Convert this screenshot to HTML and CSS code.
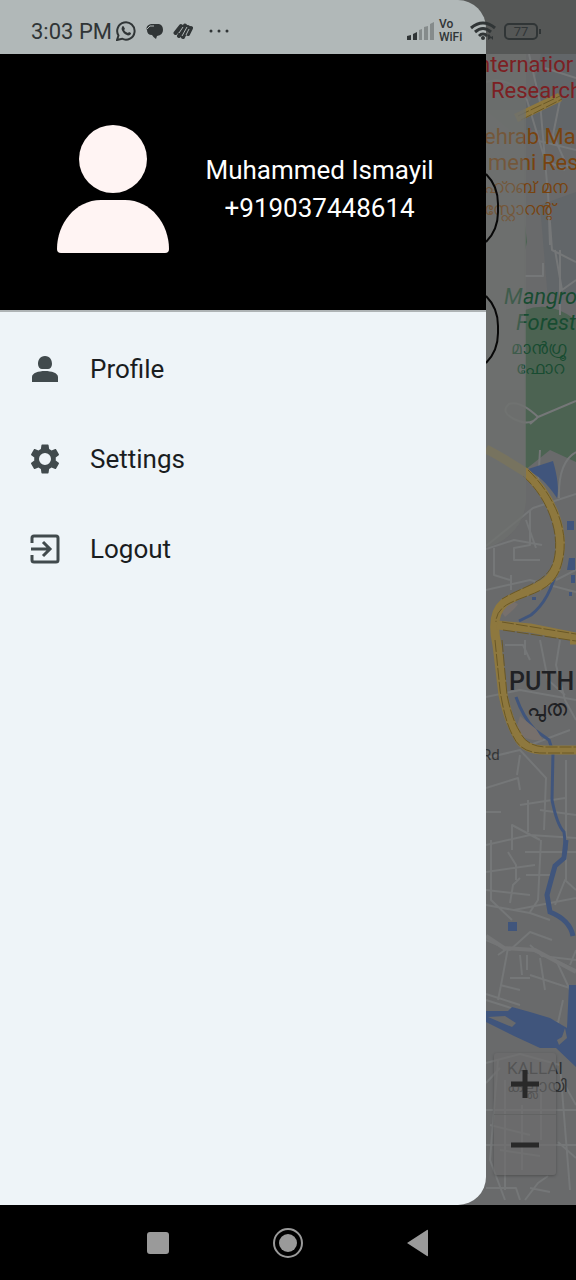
FILE: index.html
```html
<!DOCTYPE html>
<html lang="en">
<head>
<meta charset="utf-8">
<meta name="viewport" content="width=device-width, initial-scale=1">
<title>Map menu</title>
<link rel="stylesheet" href="styles.css">
</head>
<body>
<div class="screen">
  <main class="stage">
    <svg class="map" viewBox="0 0 576 1205" preserveAspectRatio="xMaxYMin slice" role="img" aria-label="Map">
      <rect class="land" width="576" height="1205"/>
      <path class="block" d="M486 92Q505 82 530 102L541 54H576V130L510 130L486 110ZM540 205L576 192V300H548Z"/>
      <path class="park" d="M525 225L527 242L525 250ZM525 310Q550 300 576 320V462L550 450L525 470Z"/>
      <g class="minor">
        <path d="M486 82Q510 75 527 100L545 160 565 170M529 54L540 102 548 195 552 250 576 262M576 78L545 68M535 140L576 150M560 100L553 135 568 168M525 276H543V263M555 250L562 290 576 280M548 190L550 245M560 250V315"/>
        <path d="M538 417Q520 400 509 404Q500 412 514 419Q530 427 538 417L576 401M538 417L530 424M538 486L540 450 M576 452Q558 462 559 498M576 494L533 508 486 546M530 510V545L514 548V560H540M486 549L514 540 542 545M494 548V575L510 580M511 575V590M486 590L530 580 576 592M556 580L576 570M526 520L536 548"/>
        <path d="M525 640V655M540 640L548 680 565 695M560 640L556 665 565 700 576 720M505 645H523L530 660M486 697L520 690 576 700M486 758L520 750 546 778 544 830M520 755L517 775M530 745L570 730M486 788L518 778 520 790M486 812H501M520 805L565 798M528 800V832M512 850V825L540 840M486 845L530 835 576 838M566 760V880M576 815L540 810"/>
        <path d="M491 840V900L512 920M508 852L516 865V880M541 840L538 900 530 912M486 872L535 865M525 852H576M526 875H550M486 890L530 895M510 903L513 885 520 878M486 905L530 913 550 920M514 910L576 898M555 905L565 880 576 890M486 940L510 950 530 932 552 940M498 955L508 948 502 980 498 1000M530 945L542 956 576 960M532 950L576 970M520 955L522 975M527 955V970M510 978H530M500 985L520 990M530 975L576 990M556 960L570 990 572 1010M486 1000L558 1023 563 1000M486 994L520 1005M540 958L545 990M576 950L570 965"/>
        <path d="M486 1063L520 1054 560 1065 570 1190M486 1110H576M486 1145H576M505 1080V1190M522 1105V1170M490 1125L530 1135M498 1060L490 1160 505 1200M541 1090V1140M486 1188H516L520 1200M525 1200L538 1183 548 1176M530 1188L550 1192M562 1080L576 1105M558 1142L576 1158M500 1150L540 1156M486 1083L500 1068"/>
      </g>
      <path class="minor wide" d="M486 936L504 948 535 950 576 972"/>
      <g class="river">
        <path d="M553 461Q560 485 557 498Q541 474 525 470Z"/>
        <path d="M567 521H574V530H567ZM569 558H575V570H567ZM571 575H575V583H571ZM569 592H572V596H569ZM532 597H536V600H532ZM508 922H517V931H508Z"/>
        <path class="stream" d="M557 568Q550 600 531 615L519 621M516 697Q523 717 535 730L549 740 553 752 552 800Q557 825 564 832L566 850"/>
        <path class="stream thick" d="M566 840L564 858 555 866Q551 880 547 895L550 912 Q570 920 573 936"/>
        <path d="M486 1011L508 1011 512 1007 530 1012 550 1018 567 1028 569 985H576V1067L556 1048 540 1048 514 1036 486 1022Z"/>
        <path class="island" d="M488 1017L505 1016 516 1023 512 1027Z"/>
        <path class="island" d="M565 1028L567 1038 559 1045 557 1040 562 1037Z"/>
      </g>
      <path class="blush" d="M505 617Q516 608 518 604L512 601 501 611ZM515 732L520 716 536 729 543 740Q527 742 515 732Z"/>
      <g class="roads">
        <path d="M486 449Q500 456 525 472C548 492 567 528 558 562C552 590 525 588 504 603Q490 615 497 645L503 695Q509 722 517 735Q523 750 545 750H576"/>
        <path d="M497 625L530 628 576 637M516 118L560 97M570 640H576"/>
      </g>
      <g class="lanes">
        <path d="M528 470C551 492 571 528 562 562C555 592 530 593 510 603Q496 610 496 622M523 476C545 495 561 530 554 560C548 583 525 585 502 599"/>
        <path d="M502 622L576 634M503 630L576 641M495 640L500 690Q505 722 513 736Q521 754 545 753H576M502 640L507 695Q512 720 520 732Q526 746 545 747H576M518 116L560 96M521 120L562 99"/>
      </g>
      <path class="fog" d="M486 54H526V500Q524 535 486 548Z"/>
      <g class="place hospital"><text x="478" y="72">nternatior</text><text x="491" y="98">Research</text></g>
      <g class="place food"><text x="484" y="144">ehrab Ma</text><text x="488" y="170">meni Res</text><text class="small" x="484" y="193">ഹ്റബ് മന</text><text class="small" x="484" y="215">സ്റ്റോറന്റ്</text></g>
      <g class="place nature"><text x="504" y="304">Mangro</text><text x="516" y="330">Forest</text><text class="small" x="511" y="354">മാൻഗ്രൂ</text><text class="small" x="516" y="374">ഫോറ</text></g>
      <path class="fog light" d="M486 110H524V390H486Z"/>
      <g class="place town"><text x="509" y="690">PUTH</text><text class="local" x="527" y="716">പുത</text></g>
      <text class="place street" x="482" y="760">Rd</text>
      <g class="place district"><text x="507" y="1074">KALLAI</text><text x="507" y="1092">കല്ലായി</text></g>
      <path class="outline" d="M486 174Q498 186 498 204V212Q498 230 486 242M486 296Q498 308 498 326V333Q498 351 486 363"/>
      <rect class="shade" width="576" height="54"/>
    </svg>
    <div class="zoom">
      <button class="zoom-button" aria-label="Zoom in"><svg width="28" height="28"><path d="M14 0V28M0 14H28"/></svg></button>
      <button class="zoom-button" aria-label="Zoom out"><svg width="28" height="28"><path d="M0 14H28"/></svg></button>
    </div>
    <aside class="drawer">
      <header class="account">
        <svg class="avatar" viewBox="0 0 112 128" aria-hidden="true"><circle cx="56" cy="34" r="34"/><path d="M44 75H68C94 75 112 99 112 124Q112 128 108 128H4Q0 128 0 124C0 99 18 75 44 75Z"/></svg>
        <div class="identity"><span>Muhammed Ismayil</span><span>+919037448614</span></div>
      </header>
      <nav class="menu">
        <a class="item" href="#profile"><svg class="icon" viewBox="0 0 30 30"><path d="M15 2C20 2 22 6 22 10C22 13 20 15 18 15H12C10 15 8 13 8 10C8 6 10 2 15 2ZM2 28V23C2 15 28 15 28 23V28Z"/></svg>Profile</a>
        <a class="item" href="#settings"><svg class="icon" viewBox="2 2 20 20"><path d="M19.14 12.94c.04-.3.06-.61.06-.94s-.02-.64-.07-.94l2.03-1.58c.18-.14.23-.41.12-.61l-1.92-3.32c-.12-.22-.37-.29-.59-.22l-2.39.96c-.5-.38-1.03-.7-1.62-.94L14.4 2.81c-.04-.24-.24-.41-.48-.41h-3.84c-.24 0-.43.17-.47.41L9.25 5.35c-.59.24-1.13.57-1.62.94l-2.39-.96c-.22-.08-.47 0-.59.22L2.74 8.87c-.12.21-.08.47.12.61l2.03 1.58c-.05.3-.09.63-.09.94s.02.64.07.94l-2.03 1.58c-.18.14-.23.41-.12.61l1.92 3.32c.12.22.37.29.59.22l2.39-.96c.5.38 1.03.7 1.62.94l.36 2.54c.05.24.24.41.48.41h3.84c.24 0 .44-.17.47-.41l.36-2.54c.59-.24 1.13-.56 1.62-.94l2.39.96c.22.08.47 0 .59-.22l1.92-3.32c.12-.22.07-.47-.12-.61ZM12 16a4 4 0 1 1 0-8 4 4 0 0 1 0 8Z"/></svg>Settings</a>
        <a class="item" href="#logout"><svg class="icon line" viewBox="0 0 30 30"><path d="M2 9V4Q2 2 4 2H26Q28 2 28 4V26Q28 28 26 28H4Q2 28 2 26V21M1 15H20M13 8L20 15 13 22"/></svg>Logout</a>
      </nav>
    </aside>
    <div class="status">
      <time>3:03 PM</time>
      <svg class="chat" width="20" height="20" viewBox="0 0 20 20"><path class="stroke" d="M1 19L2.5 14.5A8.7 8.7 0 1 1 6 17.7Z"/><path d="M6 6Q7 4 8 6L9 8 8 9Q9 11 12 12L13 11 15 12Q15 14 12 14.5Q7 13 5.500 8Z"/></svg>
      <svg class="bubble" width="18" height="18" viewBox="0 0 18 18"><path d="M5 2H13Q17 3 17 8Q17 13 11 14L10 17Q7 15 6 13Q1 13 1 8Q-1 4 5 2Z"/><path class="gap" d="M1 7L4 4H8"/></svg>
      <svg class="badge" width="20" height="18" viewBox="0 0 20 18"><path class="bars" d="M2.500 11L8 4M6 14L12 3.500M10 15L15 5M15 12L18 6"/><path class="gap" d="M6 11L10 5M9 14L14 5M13 13L16 7"/></svg>
      <svg width="20" height="6"><circle cx="2" cy="3" r="1.500"/><circle cx="10" cy="3" r="1.500"/><circle cx="18" cy="3" r="1.500"/></svg>
      <span class="spacer"></span>
      <svg class="signal" width="27" height="18" viewBox="0 0 27 18"><path d="M0 14L4 13V18H0ZM6 12L10 10V18H6Z"/><path class="faint" d="M12 8L15 7V18H12ZM17 5L21 4V18H17ZM23 2L27 0V18H23Z"/></svg>
      <span class="vowifi">Vo<br>WiFi</span>
      <svg class="wifi" width="26" height="20" viewBox="0 0 26 20"><path class="stroke arcs" d="M1 7Q13-3 25 7M5 11Q13 4 21 11M9 15Q13 11 17 15"/><circle cx="13" cy="17" r="2"/><path d="M18 19V15L16 16 19 13 21 16 23 15V19L21 17Z"/></svg>
      <span class="battery"><span>77</span></span>
    </div>
  </main>
  <footer class="system">
    <button aria-label="Recent apps"><svg width="24" height="24"><rect x="1" y="1" width="22" height="22" rx="3"/></svg></button>
    <button aria-label="Home"><svg width="32" height="32"><circle class="ring" cx="16" cy="16" r="14"/><circle cx="16" cy="16" r="9"/></svg></button>
    <button aria-label="Back"><svg width="24" height="28"><path d="M1 14L21 1Q22 0 22 2V26Q22 28 21 27Z"/></svg></button>
  </footer>
</div>
</body>
</html>
```

FILE: styles.css
```css
* { box-sizing: border-box; }
body { margin: 0; background: #000; font-family: Roboto, "Noto Sans", sans-serif; }
svg { display: block; flex: none; }
button { display: grid; place-items: center; padding: 0; border: 0; background: none; cursor: pointer; }

.screen { display: flex; flex-direction: column; min-height: 100vh; }
.stage { position: relative; flex: 1; display: flex; overflow: hidden; }

/* Map canvas */
.map { position: absolute; inset: 0; width: 100%; height: 100%; }
.land { fill: #696a6b; }
.block { fill: #626669; }
.park { fill: #4c6352; }
.minor { fill: none; stroke: #757778; stroke-width: 2; stroke-linejoin: round; }
.minor.wide { stroke-width: 4; stroke: #757677; }
.river { fill: #40557c; }
.stream { fill: none; stroke: #40557c; stroke-width: 3; }
.stream.thick { stroke-width: 5; }
.island { fill: #696a6b; }
.blush { fill: #77706c; }
.roads { fill: none; stroke: #8e783e; stroke-width: 9; stroke-linejoin: round; }
.lanes { fill: none; stroke: #6a5826; stroke-width: 1; stroke-dasharray: 12 2; }
.fog { fill: #6e706e; fill-opacity: .7; }
.fog.light { fill-opacity: .45; }
.outline { fill: none; stroke: #080808; stroke-width: 2; }
.shade { fill: #555756; }
.place { font-size: 22px; }
.place .small { font-size: 17px; }
.hospital { fill: #7c2023; }
.food { fill: #78430f; }
.nature { fill: #184c31; font-style: italic; }
.nature .small { font-style: normal; }
.town { fill: #202124; font-size: 25px; font-weight: 500; }
.town .local { font-size: 22px; }
.street { fill: #343536; font-size: 15px; }
.district { fill: #303132; font-size: 17px; }

.zoom { position: absolute; right: 20px; bottom: 30px; display: grid; width: 62px; border-radius: 3px; background: rgb(108 109 109 / 60%); box-shadow: 0 1px 3px rgb(0 0 0 / 25%); }
.zoom-button { height: 61px; }
.zoom-button + .zoom-button { border-top: 1px solid #626363; }
.zoom svg { stroke: #292929; stroke-width: 5; }

/* Drawer */
.drawer { position: relative; width: 84.4%; padding-top: 54px; overflow: hidden; border-radius: 0 28px 28px 0; background: linear-gradient(#b1b8b8 54px, #eef4f8 54px); }
.account { display: flex; align-items: center; gap: 32px; height: 258px; padding: 14px 48px 0 57px; border-bottom: 2px solid #aeb3b5; background: #000; }
.avatar { width: 112px; fill: #fff4f3; }
.identity { display: grid; flex: 1; justify-items: center; color: #fff; font-size: 26px; line-height: 38px; white-space: nowrap; }
.menu { display: grid; padding-top: 12px; }
.item { display: flex; align-items: center; gap: 30px; height: 90px; padding-left: 30px; color: #1a1d1f; font-size: 26px; text-decoration: none; }
.icon { width: 30px; height: 30px; fill: #414a4d; }
.icon.line { fill: none; stroke: #414a4d; stroke-width: 3; }

/* Status bar lies over the drawer and the map */
.status { position: absolute; inset: 0 0 auto; display: flex; align-items: center; height: 54px; padding: 8px 35px 0 31px; color: #303536; fill: #303536; }
.status time { font-size: 22px; white-space: nowrap; }
.stroke { fill: none; stroke: #303536; stroke-width: 2; }
.arcs { stroke-width: 3; }
.chat { margin-left: 4px; }
.bubble { margin-left: 10px; }
.badge { margin: 0 16px 0 9px; }
.gap { fill: none; stroke: #b1b8b8; stroke-width: 1; }
.bars { fill: none; stroke: #303536; stroke-width: 4; stroke-linecap: round; }
.spacer { flex: 1; }
.faint { fill: #858b8b; }
.vowifi { width: 26px; margin: 0 5px; font-size: 12px; font-weight: 500; line-height: 13px; }
.wifi { margin-right: 8px; }
.battery { position: relative; display: grid; place-items: center; width: 34px; height: 17px; margin-right: 3px; border: 2px solid #303536; border-radius: 5px; font-size: 13px; line-height: 13px; }
.battery::after { content: ""; position: absolute; right: -5px; width: 2px; height: 5px; background: #303536; }

/* System navigation */
.system { display: grid; grid-template-columns: repeat(3, 130px); justify-content: center; height: 75px; background: #000; fill: #9a9a9a; }
.ring { fill: none; stroke: #9a9a9a; stroke-width: 2; }
```
